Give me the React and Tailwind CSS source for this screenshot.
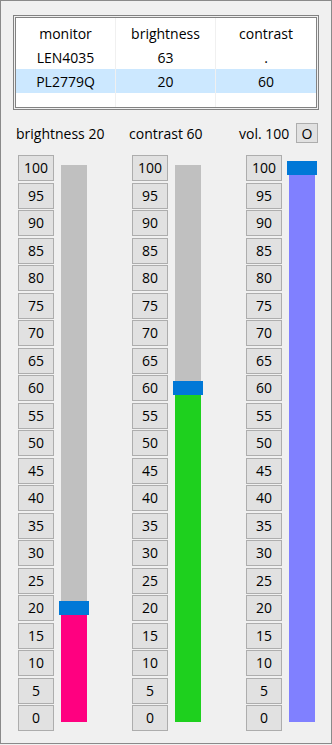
import React from "react";

const values = [100, 95, 90, 85, 80, 75, 70, 65, 60, 55, 50, 45, 40, 35, 30, 25, 20, 15, 10, 5, 0];

function Slider({ value, fill }) {
  const top = (100 - value) * 5.5 - 4;
  const fillH = 557 - (top + 14);
  return (
    <div className="flex gap-[7px]">
      <div className="flex flex-col justify-between h-[576px] w-[36px]">
        {values.map((v) => (
          <div
            key={v}
            className="h-[26px] w-[36px] bg-[#e1e1e1] border border-[#adadad] flex items-center justify-center leading-none"
          >
            {v}
          </div>
        ))}
      </div>
      <div className="mt-[10px] h-[557px] w-[26px] bg-[#c0c0c0] relative">
        <div className={`absolute left-0 bottom-0 w-[26px] ${fill}`} style={{ height: fillH }} />
        <div className="absolute left-[-2px] w-[30px] h-[14px] bg-[#0078d7]" style={{ top }} />
      </div>
    </div>
  );
}

export default function App() {
  const rows = [
    ["LEN4035", "63", "."],
    ["PL2779Q", "20", "60"],
  ];
  return (
    <div
      className="w-[332px] h-[745px] bg-[#f0f0f0] text-black text-[14px]"
      style={{ fontFamily: '"Open Sans", "Noto Sans", sans-serif' }}
    >
      <div className="h-[744px] border border-[#8a8a8a] flex flex-col">
        <div className="mt-[14px] ml-[12px] w-[306px] h-[95px] border border-[#828282] p-px bg-[#f0f0f0]">
          <div className="h-full border border-[#828282] bg-white flex">
            {[0, 1, 2].map((c) => (
              <div
                key={c}
                className={`w-[100px] h-full flex flex-col pt-[3px] ${c < 2 ? "border-r border-[#f0f0f0]" : ""}`}
              >
                <div className="h-[24px] flex items-center justify-center">
                  {["monitor", "brightness", "contrast"][c]}
                </div>
                {rows.map((r, i) => (
                  <div
                    key={i}
                    className={`h-[24px] flex items-center justify-center ${i === 1 ? "bg-[#cce8ff]" : ""}`}
                  >
                    {r[c]}
                  </div>
                ))}
              </div>
            ))}
          </div>
        </div>

        <div className="mt-[13px] h-[20px] flex items-center pl-[15px]">
          <div className="w-[113px]">brightness 20</div>
          <div className="w-[110px]">contrast 60</div>
          <div className="w-[57px]">vol. 100</div>
          <div className="w-[22px] h-[20px] bg-[#e1e1e1] border border-[#adadad] flex items-center justify-center">
            O
          </div>
        </div>

        <div className="mt-[12px] pl-[17px] flex gap-[45px]">
          <Slider value={20} fill="bg-[#ff0080]" />
          <Slider value={60} fill="bg-[#1ed01e]" />
          <Slider value={100} fill="bg-[#8080ff]" />
        </div>
      </div>
    </div>
  );
}
